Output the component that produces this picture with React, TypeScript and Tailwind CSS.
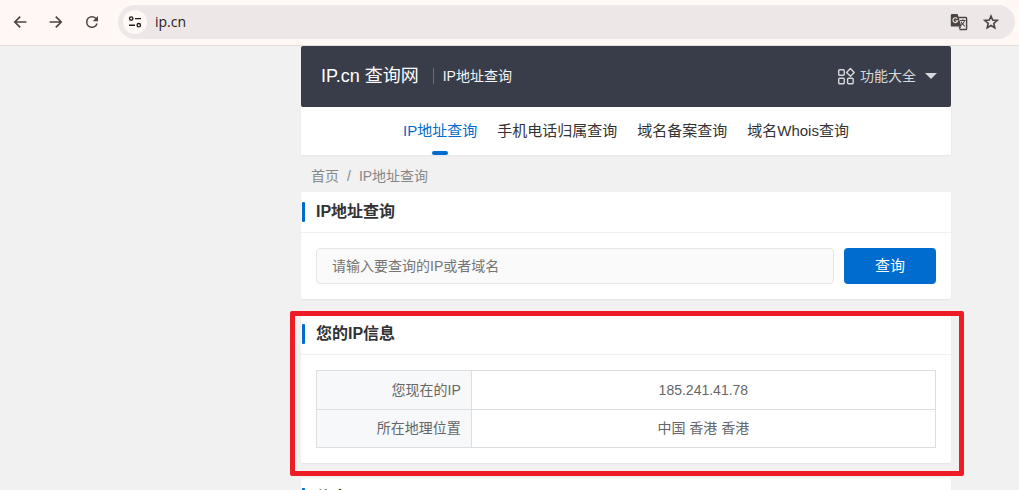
import type { ReactNode } from 'react';

const NAV_ITEMS = [
  { label: 'IP地址查询', active: true },
  { label: '手机电话归属查询', active: false },
  { label: '域名备案查询', active: false },
  { label: '域名Whois查询', active: false },
];

const IP_INFO = [
  { label: '您现在的IP', value: '185.241.41.78' },
  { label: '所在地理位置', value: '中国 香港 香港' },
];

function BrowserBar() {
  return (
    <div className="flex h-[46px] shrink-0 items-center border-b border-[#e5dedb] bg-[#fff8f5] pr-1 pb-px pl-3 text-[#4d4340]">
      <button type="button" aria-label="后退" className="flex size-4 items-center justify-center">
        <svg viewBox="0 0 16 16" className="size-4" fill="none" stroke="currentColor" strokeWidth="1.7">
          <path d="M14.4 8H3M8.2 2.6 2.8 8l5.4 5.4" />
        </svg>
      </button>
      <button type="button" aria-label="前进" className="ml-5 flex size-4 items-center justify-center">
        <svg viewBox="0 0 16 16" className="size-4" fill="none" stroke="currentColor" strokeWidth="1.7">
          <path d="M1.6 8H13M7.8 2.6 13.2 8l-5.4 5.4" />
        </svg>
      </button>
      <button type="button" aria-label="重新加载" className="ml-[19px] flex size-[18px] items-center justify-center">
        <svg viewBox="0 0 24 24" className="size-[18px]" fill="currentColor">
          <path d="M17.65 6.35A7.96 7.96 0 0 0 12 4a8 8 0 1 0 7.73 10h-2.08A6 6 0 1 1 12 6c1.66 0 3.14.69 4.22 1.78L13 11h7V4z" />
        </svg>
      </button>
      <div className="ml-[17px] flex h-[34px] flex-1 items-center rounded-full bg-[#ede7e8] pr-[15px] pl-[5px]">
        <button type="button" aria-label="网站信息" className="flex size-6 items-center justify-center rounded-full bg-[#fff8f5] text-[#1f1b1a]">
          <svg viewBox="0 0 16 16" className="size-4" fill="none" stroke="currentColor" strokeWidth="1.4">
            <circle cx="4.2" cy="4.6" r="1.7" />
            <path d="M8 4.6h6M2 11.2h6" />
            <circle cx="11.8" cy="11.2" r="1.7" />
          </svg>
        </button>
        <input
          aria-label="地址"
          defaultValue="ip.cn"
          className="ml-2 min-w-0 flex-1 bg-transparent font-['Open_Sans','Noto_Sans_CJK_SC',sans-serif] text-sm text-[#1f1b1a] outline-none"
        />
        <button type="button" aria-label="翻译此页" className="size-[18px]">
          <svg viewBox="0 0 18 18" className="size-[18px]">
            <path d="M8 4.5h7.8a.8.8 0 0 1 .8.8v10.4a.8.8 0 0 1-.8.8H9.6" fill="none" stroke="currentColor" strokeWidth="1.4" />
            <path d="M2 1h5.6l3.8 12.6H2a1.2 1.2 0 0 1-1.2-1.2V2.2A1.2 1.2 0 0 1 2 1z" fill="currentColor" />
            <path d="M8.5 13.6h2.9l-1.8 2.9z" fill="currentColor" />
            <path d="M7.3 5.8A2.4 2.4 0 1 0 7.7 7.7H5.3" fill="none" stroke="#ede7e8" strokeWidth="1.1" />
            <path d="M10 7.5h5.6M12.8 6.3v1.2M14.6 7.5c-.4 2-1.6 3.6-3.4 4.8M11 8.8c.8 1.8 2.2 3.2 3.9 4.6" fill="none" stroke="currentColor" strokeWidth="1.1" />
          </svg>
        </button>
        <button type="button" aria-label="为此标签页添加书签" className="ml-[14px] size-[18px]">
          <svg viewBox="0 0 18 18" className="size-[18px]" fill="none" stroke="currentColor" strokeWidth="1.6">
            <path d="m9 3 1.7 4.1 4.5.4-3.4 2.9 1 4.4L9 12.5l-3.8 2.3 1-4.4-3.4-2.9 4.5-.4z" />
          </svg>
        </button>
      </div>
    </div>
  );
}

function SiteHeader() {
  return (
    <header className="flex h-[61px] items-center justify-between rounded-xs bg-[#393d49] pr-[14px] pb-px pl-5">
      <div className="flex items-center">
        <a href="#" className="text-lg text-white">IP.cn 查询网</a>
        <span className="ml-[14px] h-4 w-px bg-[#6b6e77]" />
        <h1 className="ml-[9px] text-sm text-[#f5f5f6]">IP地址查询</h1>
      </div>
      <button type="button" className="flex items-center text-sm text-[#d7d8db]">
        <svg viewBox="0 0 18 18" className="mr-[5px] size-[18px]" fill="none" stroke="currentColor" strokeWidth="1.4">
          <rect x="1.7" y="2.7" width="5.6" height="5.6" rx="1" />
          <rect x="1.7" y="11.2" width="5.6" height="5.6" rx="1" />
          <rect x="10.6" y="11.2" width="5.6" height="5.6" rx="1" />
          <path d="m13.4 1.5 3.8 3.9-3.8 3.9-3.8-3.9z" strokeLinejoin="round" />
        </svg>
        功能大全
        <svg viewBox="0 0 12 6" className="ml-[9px] h-[6px] w-3" fill="currentColor">
          <path d="M0 0h12L6 6z" />
        </svg>
      </button>
    </header>
  );
}

function SiteNav() {
  return (
    <nav className="flex h-12 justify-center gap-5 bg-white text-[15px] shadow-[0_1px_2px_rgba(0,0,0,0.05)]">
      {NAV_ITEMS.map(item => (
        <a
          key={item.label}
          href="#"
          className={item.active ? 'flex flex-col items-center text-[#006cce]' : 'text-[#333333]'}
        >
          <span className="block h-11 leading-12">{item.label}</span>
          {item.active && <span className="h-1 w-4 rounded-xs bg-[#006cce]" />}
        </a>
      ))}
    </nav>
  );
}

function Panel({ title, children }: { title: string; children?: ReactNode }) {
  return (
    <section className="rounded-xs bg-white shadow-[0_1px_2px_rgba(0,0,0,0.05)]">
      <div className="flex h-[41px] items-center border-b border-[#f0f0f0] pl-px">
        <span className="h-5 w-[3px] rounded-[1px] bg-[#006cce]" />
        <h2 className="ml-[11px] text-base leading-10 font-bold text-[#333333]">{title}</h2>
      </div>
      <div className="p-[15px]">{children}</div>
    </section>
  );
}

export default function App() {
  return (
    <div className="flex h-screen flex-col overflow-hidden bg-[#f1f1f1] font-['Liberation_Sans','Noto_Sans_CJK_SC',sans-serif]">
      <BrowserBar />
      <main className="min-h-0 flex-1 overflow-hidden pr-[68px] pl-[301px]">
        <SiteHeader />
        <SiteNav />
        <div className="flex h-[37px] items-center gap-2 px-[10px] pt-1 text-sm text-[#888888]">
          <a href="#">首页</a>
          <span>/</span>
          <span>IP地址查询</span>
        </div>
        <div className="flex flex-col gap-[15px]">
          <Panel title="IP地址查询">
            <form className="flex gap-[10px]" onSubmit={e => e.preventDefault()}>
              <input
                type="text"
                aria-label="IP或者域名"
                placeholder="请输入要查询的IP或者域名"
                className="h-9 min-w-0 flex-1 rounded border border-[#e6e6e6] bg-[#fafafa] px-[15px] text-sm outline-none placeholder:text-[#757575]"
              />
              <button type="submit" className="h-9 w-[92px] rounded bg-[#006cce] text-[15px] text-white">查询</button>
            </form>
          </Panel>
          <div className="relative">
            <Panel title="您的IP信息">
              <table className="h-[78px] w-full table-fixed border-collapse text-sm text-[#666666]">
                <tbody>
                  {IP_INFO.map(row => (
                    <tr key={row.label}>
                      <th scope="row" className="w-1/4 border border-[#dcdee0] bg-[#f6f8fa] px-[10px] text-right font-normal">{row.label}</th>
                      <td className="border border-[#dcdee0] px-[10px] text-center">{row.value}</td>
                    </tr>
                  ))}
                </tbody>
              </table>
            </Panel>
            {/* highlight frame around the result */}
            <div className="pointer-events-none absolute -top-[3px] -right-[13px] -bottom-[13px] -left-[11px] rounded-xs border-[5px] border-[#ee1c25]" />
          </div>
          <Panel title="信息" />
        </div>
      </main>
    </div>
  );
}
